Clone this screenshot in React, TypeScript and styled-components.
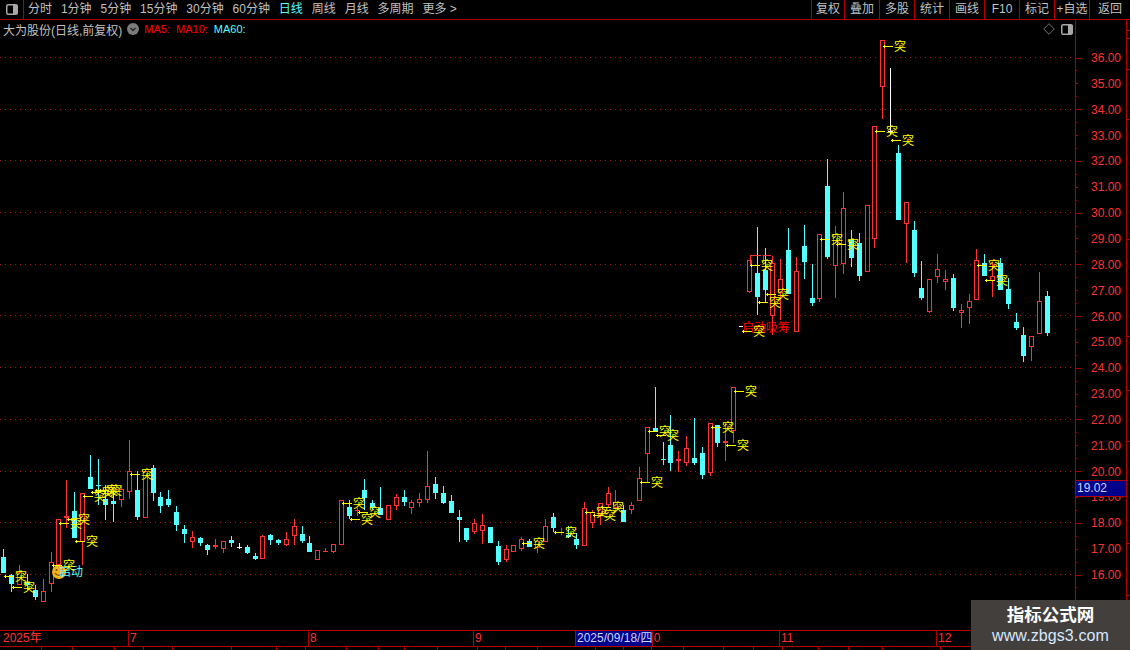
import React from "react";
import styled, { createGlobalStyle } from "styled-components";

const LINE = "#b00000";
const RED = "#ff3232";
const CYAN = "#54ffff";
const FONT = `"Liberation Sans", "Noto Sans CJK SC", sans-serif`;

const Global = createGlobalStyle`
  html, body { margin: 0; padding: 0; background: #000; overflow: hidden; }
  body { font-family: ${FONT}; font-size: 12px; }
`;

const Page = styled.div`
  position: relative;
  width: 1130px;
  height: 650px;
  background: #000;
  overflow: hidden;
  display: flex;
  flex-direction: column;
`;

const Toolbar = styled.div`
  display: flex;
  align-items: stretch;
  height: 19px;
  border-bottom: 1px solid ${LINE};
  color: #c0c0c0;
`;
const IconCell = styled.div`
  width: 23px;
  display: flex;
  align-items: center;
  justify-content: center;
  border-right: 1px solid ${LINE};
`;
const PeriodNav = styled.nav`
  display: flex;
  align-items: center;
  gap: 8.9px;
  padding-left: 4px;
`;
const PeriodItem = styled.span<{ $active?: boolean }>`
  color: ${(p) => (p.$active ? CYAN : "#c0c0c0")};
  white-space: nowrap;
  line-height: 19px;
`;
const ToolGroup = styled.div`
  display: flex;
  margin-left: auto;
`;
const ToolButton = styled.div<{ $w: number }>`
  width: ${(p) => p.$w}px;
  box-sizing: border-box;
  border-left: 1px solid ${LINE};
  text-align: center;
  line-height: 19px;
  white-space: nowrap;
`;

const Body = styled.div`
  display: flex;
  height: 610px;
`;
const ChartArea = styled.div`
  position: relative;
  width: 1075px;
  height: 610px;
`;
const ChartSvg = styled.svg`
  display: block;
  font-family: ${FONT};
`;
const InfoRow = styled.div`
  position: absolute;
  left: 3px;
  top: 0;
  right: 0;
  height: 18px;
  display: flex;
  align-items: center;
  color: #c0c0c0;
  white-space: nowrap;
`;
const MaLabel = styled.span<{ $color: string; $gap: number }>`
  color: ${(p) => p.$color};
  margin-left: ${(p) => p.$gap}px;
  font-size: 11px;
`;
const InfoIcons = styled.div`
  margin-left: auto;
  margin-right: 2px;
  display: flex;
  align-items: center;
  gap: 6px;
`;
const PriceAxis = styled.div`
  position: relative;
  width: 50px;
  height: 610px;
  border-left: 1px solid ${LINE};
  border-right: 1px solid ${LINE};
`;
const PriceTag = styled.div`
  position: absolute;
  left: 0;
  right: 0;
  top: 460px;
  height: 15px;
  background: #00008b;
  border-top: 1px solid ${LINE};
  border-bottom: 1px solid ${LINE};
  color: #cdd6ff;
  line-height: 15px;
  padding-left: 1px;
`;
const SideStrip = styled.div`
  flex: 1;
`;

const TimeAxis = styled.div`
  position: relative;
  display: flex;
  height: 15px;
  border-top: 1px solid ${LINE};
  border-bottom: 1px solid ${LINE};
  color: ${RED};
  line-height: 15px;
`;
const TimeCell = styled.div<{ $w: number; $first?: boolean }>`
  flex: 0 0 ${(p) => p.$w}px;
  box-sizing: border-box;
  padding-left: ${(p) => (p.$first ? 3 : 1)}px;
  border-left: ${(p) => (p.$first ? "none" : `1px solid ${LINE}`)};
`;
const DateTag = styled.div`
  position: absolute;
  left: 575px;
  top: 0;
  width: 78px;
  height: 15px;
  box-sizing: border-box;
  padding-left: 1px;
  background: #00008b;
  border-left: 1px solid ${LINE};
  border-right: 1px solid ${LINE};
  color: #cdd6ff;
  white-space: nowrap;
`;
const BottomStrip = styled.div`
  height: 3px;
  display: flex;
`;
const StripTick = styled.i<{ $w: number }>`
  flex: 0 0 ${(p) => p.$w}px;
  box-sizing: border-box;
  border-right: 1px solid ${LINE};
`;

const Watermark = styled.div`
  position: absolute;
  right: 0;
  bottom: 0;
  width: 159px;
  height: 50px;
  background: #433f3d;
  display: flex;
  flex-direction: column;
  align-items: center;
  padding-top: 4px;
  box-sizing: border-box;
`;
const WatermarkTitle = styled.div`
  color: #fff;
  font-weight: 700;
  font-size: 17.5px;
  line-height: 22px;
`;
const WatermarkUrl = styled.div`
  color: #d6e8ff;
  font-size: 16px;
  line-height: 19px;
  letter-spacing: 0.1px;
`;

type Candle = [number, number, number, number, number, "r" | "c" | "w"];
const candles: Candle[] = [
  [3, 549, 557, 573, 573, "c"], [11, 574, 575, 584, 592, "c"], [19, 565, 572, 585, 585, "r"], [27, 574, 582, 585, 590, "c"],
  [35, 585, 590, 597, 600, "c"], [43, 579, 591, 602, 602, "r"], [51, 552, 562, 584, 592, "r"], [58, 519, 519, 565, 565, "r"],
  [66, 480, 516, 518, 528, "r"], [74, 492, 511, 538, 538, "c"], [82, 493, 493, 542, 565, "r"], [90, 455, 477, 489, 489, "c"],
  [98, 459, 485, 486, 505, "c"], [105, 485, 499, 505, 520, "c"], [113, 490, 501, 504, 522, "c"], [121, 485, 489, 500, 507, "r"],
  [129, 440, 471, 492, 499, "r"], [137, 471, 490, 517, 520, "c"], [145, 470, 471, 518, 518, "r"], [153, 465, 468, 493, 501, "c"],
  [160, 492, 497, 506, 513, "c"], [168, 490, 499, 505, 507, "c"], [176, 506, 512, 525, 531, "c"], [184, 525, 529, 534, 543, "c"],
  [192, 531, 537, 542, 548, "r"], [200, 537, 538, 543, 546, "c"], [207, 544, 545, 550, 555, "c"], [215, 539, 545, 547, 549, "r"],
  [223, 541, 541, 549, 553, "r"], [231, 536, 540, 543, 547, "c"], [239, 543, 547, 548, 549, "w"], [247, 545, 547, 553, 554, "c"],
  [255, 553, 556, 559, 560, "c"], [262, 535, 536, 559, 559, "r"], [270, 534, 535, 540, 545, "c"], [278, 539, 540, 543, 545, "c"],
  [286, 532, 539, 545, 546, "r"], [294, 519, 526, 536, 545, "r"], [302, 526, 534, 541, 543, "c"], [309, 536, 543, 552, 552, "c"],
  [317, 550, 550, 560, 560, "r"], [325, 548, 551, 552, 552, "r"], [333, 544, 544, 552, 553, "r"], [341, 500, 500, 545, 545, "r"],
  [349, 500, 507, 516, 519, "c"], [357, 508, 510, 511, 516, "r"], [364, 479, 490, 498, 510, "c"], [372, 500, 503, 508, 510, "c"],
  [380, 487, 508, 515, 515, "c"], [388, 505, 505, 520, 520, "r"], [396, 494, 497, 506, 510, "r"], [404, 490, 497, 502, 506, "c"],
  [411, 500, 502, 508, 514, "r"], [419, 493, 499, 503, 507, "r"], [427, 451, 486, 500, 503, "r"], [435, 477, 484, 493, 499, "c"],
  [443, 486, 493, 503, 504, "c"], [451, 495, 501, 513, 513, "c"], [459, 510, 517, 520, 542, "c"], [466, 528, 528, 540, 542, "c"],
  [474, 519, 523, 532, 534, "r"], [482, 514, 525, 531, 544, "r"], [490, 527, 527, 543, 543, "c"], [498, 541, 546, 562, 565, "c"],
  [506, 545, 549, 560, 562, "r"], [513, 545, 545, 552, 552, "r"], [521, 537, 539, 549, 551, "r"], [529, 539, 541, 547, 547, "c"],
  [537, 540, 541, 548, 553, "r"], [545, 519, 526, 542, 542, "r"], [553, 513, 517, 528, 532, "c"], [561, 528, 532, 533, 535, "r"],
  [568, 526, 535, 537, 538, "c"], [576, 533, 539, 545, 549, "c"], [584, 502, 508, 546, 546, "r"], [592, 510, 512, 523, 528, "r"],
  [600, 503, 503, 515, 525, "r"], [608, 487, 493, 505, 507, "r"], [615, 490, 502, 508, 512, "r"], [623, 505, 510, 522, 522, "c"],
  [631, 502, 505, 510, 514, "r"], [639, 467, 478, 501, 501, "r"], [647, 427, 427, 454, 482, "r"], [655, 387, 428, 432, 432, "c"],
  [663, 442, 459, 460, 465, "c"], [670, 415, 445, 463, 471, "c"], [678, 451, 459, 461, 472, "r"], [686, 436, 448, 463, 466, "r"],
  [694, 418, 458, 463, 465, "c"], [702, 447, 453, 475, 479, "c"], [710, 423, 423, 473, 476, "r"], [717, 425, 425, 443, 447, "c"],
  [725, 423, 441, 443, 461, "r"], [733, 387, 387, 431, 443, "r"],
  [749, 260, 260, 292, 293, "r"], [757, 227, 273, 297, 315, "c"], [765, 248, 270, 290, 302, "c"], [772, 256, 263, 316, 335, "r"],
  [780, 259, 279, 293, 320, "r"], [788, 228, 250, 294, 294, "c"], [796, 257, 271, 332, 332, "r"], [804, 225, 246, 262, 279, "c"],
  [812, 264, 298, 303, 306, "c"], [819, 234, 234, 299, 302, "r"], [827, 159, 186, 257, 259, "c"], [835, 226, 234, 266, 298, "r"],
  [843, 192, 208, 264, 274, "r"], [851, 230, 240, 258, 267, "c"], [859, 233, 243, 276, 281, "c"], [867, 205, 205, 272, 272, "r"],
  [874, 126, 126, 239, 248, "r"], [882, 40, 40, 87, 119, "r"], [890, 68, 131, 132, 135, "w"], [898, 145, 153, 220, 220, "c"],
  [906, 202, 202, 224, 263, "r"], [914, 221, 230, 273, 277, "c"], [921, 261, 288, 298, 300, "c"], [929, 279, 279, 312, 313, "r"],
  [937, 254, 269, 277, 283, "r"], [945, 270, 279, 282, 290, "r"], [953, 274, 278, 308, 311, "c"], [961, 304, 310, 313, 328, "r"],
  [969, 294, 301, 308, 324, "r"], [976, 249, 260, 300, 300, "r"], [984, 254, 263, 276, 276, "c"], [992, 263, 276, 281, 297, "r"],
  [1000, 258, 263, 290, 290, "c"], [1008, 278, 289, 304, 309, "c"], [1016, 313, 322, 328, 330, "c"], [1023, 327, 335, 356, 362, "c"],
  [1031, 336, 336, 347, 361, "r"], [1039, 272, 301, 334, 334, "r"], [1047, 291, 296, 333, 336, "c"],
];

const signals: [number, number][] = [
  [4, 576], [12, 587], [52, 565], [59, 523], [67, 519], [75, 541], [83, 496], [91, 492], [95, 490], [99, 490], [130, 474],
  [342, 503], [350, 519], [358, 512], [522, 543], [554, 532], [585, 512], [593, 515], [601, 507],
  [640, 482], [648, 431], [656, 435], [711, 427], [726, 445], [734, 391],
  [742, 331], [750, 265], [758, 302], [766, 294], [820, 239], [836, 244], [875, 131], [883, 46], [891, 140], [977, 265], [985, 280],
];

const gridYs = [57, 109, 160, 212, 264, 315, 367, 419, 471, 522, 574];
const prices = Array.from({ length: 21 }, (_, i) => 36 - i);
const priceY = (p: number) => 57.5 + (36 - p) * 25.85;

const CandleMark: React.FC<{ c: Candle }> = ({ c }) => {
  const [x, wt, bt, bb, wb, t] = c;
  const col = t === "r" ? RED : t === "c" ? CYAN : "#ffffff";
  const thin = bb - bt <= 2;
  const wick = (
    <>
      {wt < bt && <rect x={x} y={wt} width={1} height={bt - wt} fill={col} />}
      {wb > bb && <rect x={x} y={bb} width={1} height={wb - bb} fill={col} />}
    </>
  );
  if (t === "c" || thin) {
    return (
      <>
        {wick}
        <rect x={x - 2} y={bt} width={5} height={Math.max(bb - bt, 1)} fill={col} />
      </>
    );
  }
  return (
    <>
      {wick}
      <rect x={x - 1.5} y={bt + 0.5} width={4} height={bb - bt - 1} fill="#000" stroke={col} strokeWidth={1} />
    </>
  );
};

const SignalMark: React.FC<{ x: number; y: number }> = ({ x, y }) => (
  <g fill="#ffff00">
    <rect x={x} y={y} width={10} height={1} />
    <rect x={x + 1} y={y - 1} width={1} height={3} />
    <text x={x + 11} y={y + 5} fontSize={12}>突</text>
  </g>
);

const SplitIcon: React.FC = () => (
  <svg width="12" height="11" viewBox="0 0 12 11">
    <rect x="0.75" y="0.75" width="10.5" height="9.5" rx="1.5" fill="none" stroke="#a8a8a8" strokeWidth="1.5" />
    <rect x="7" y="1" width="4.5" height="9" fill="#a8a8a8" />
  </svg>
);

const periods = ["分时", "1分钟", "5分钟", "15分钟", "30分钟", "60分钟", "日线", "周线", "月线", "多周期", "更多 >"];
const tools: [string, number][] = [
  ["复权", 33], ["叠加", 35], ["多股", 35], ["统计", 35], ["画线", 35], ["F10", 35], ["标记", 35], ["+自选", 35], ["返回", 41],
];
const timeCells: [string, number][] = [
  ["2025年", 128], ["7", 180], ["8", 165], ["9", 172], ["10", 134], ["11", 157], ["12", 194],
];
const stripTicks = [42, 31, 42, 29, 29, 59, 45, 29, 41, 32, 26, 33, 40, 28, 32, 58, 28, 28, 32, 40, 30, 29, 36, 30, 34, 58, 36, 30];

export default function App() {
  return (
    <Page>
      <Global />
      <Toolbar>
        <IconCell><SplitIcon /></IconCell>
        <PeriodNav>
          {periods.map((p) => (
            <PeriodItem key={p} $active={p === "日线"}>{p}</PeriodItem>
          ))}
        </PeriodNav>
        <ToolGroup>
          {tools.map(([t, w]) => (
            <ToolButton key={t} $w={w}>{t}</ToolButton>
          ))}
        </ToolGroup>
      </Toolbar>
      <Body>
        <ChartArea>
          <ChartSvg width={1075} height={610} viewBox="0 20 1075 610">
            <g shapeRendering="crispEdges">
              {gridYs.map((y) => (
                <line key={y} x1={0} x2={1075} y1={y + 0.5} y2={y + 0.5} stroke="#a81414" strokeDasharray="1 4" />
              ))}
              {candles.map((c) => (
                <CandleMark key={c[0]} c={c} />
              ))}
              <path d="M750.5 265V255.5H760.5M763.5 262V255.5H770.5" fill="none" stroke={RED} />
              <rect x={739} y={326} width={4} height={1} fill="#fff" />
            </g>
            <circle cx={59} cy={572} r={7} fill="#f0b41c" />
            <path d="M55 573a4.5 4.5 0 0 0 8 0" fill="none" stroke="#7a4a00" strokeWidth={1.2} />
            <circle cx={56.5} cy={570} r={1} fill="#7a4a00" />
            <circle cx={61.5} cy={570} r={1} fill="#7a4a00" />
            <text x={59} y={576} fontSize={12} fill={CYAN}>启动</text>
            <text x={742} y={332} fontSize={12} fill="#ff0000">启动吸筹</text>
            {signals.map(([x, y]) => (
              <SignalMark key={`${x}-${y}`} x={x} y={y} />
            ))}
          </ChartSvg>
          <InfoRow>
            大为股份(日线,前复权)
            <svg width="12" height="12" viewBox="0 0 12 12" style={{ marginLeft: 5 }}>
              <circle cx="6" cy="6" r="6" fill="#7b7b7b" />
              <path d="M3.5 5l2.5 2.5L8.5 5" fill="none" stroke="#222" strokeWidth="1.3" />
            </svg>
            <MaLabel $color="#ff0000" $gap={5}>MA5:</MaLabel>
            <MaLabel $color="#ff0000" $gap={6}>MA10:</MaLabel>
            <MaLabel $color={CYAN} $gap={6}>MA60:</MaLabel>
            <InfoIcons>
              <svg width="12" height="12" viewBox="0 0 12 12">
                <path d="M6 .7L11.3 6 6 11.3.7 6z" fill="none" stroke="#777" />
              </svg>
              <SplitIcon />
            </InfoIcons>
          </InfoRow>
        </ChartArea>
        <PriceAxis>
          <ChartSvg width={50} height={610} viewBox="1076 20 50 610">
            <g shapeRendering="crispEdges" fill={LINE}>
              {prices.map((p) => (
                <React.Fragment key={p}>
                  <rect x={1076} y={Math.round(priceY(p))} width={p % 2 === 0 ? 5 : 2} height={1} />
                  <rect x={1076} y={Math.round(priceY(p) + 12.9)} width={1} height={1} />
                </React.Fragment>
              ))}
            </g>
            {prices.map((p) => (
              <text key={p} x={1091} y={priceY(p) + 4.5} fontSize={12} fill={RED}>{p.toFixed(2)}</text>
            ))}
          </ChartSvg>
          <PriceTag>19.02</PriceTag>
        </PriceAxis>
        <SideStrip>
          <ChartSvg width={3} height={610} viewBox="1127 20 3 610">
            <g shapeRendering="crispEdges" fill={LINE}>
              {[30, 38, 69, 119, 239, 336, 390, 441, 543, 595].map((y) => (
                <rect key={y} x={1127} y={y} width={3} height={1} />
              ))}
            </g>
          </ChartSvg>
        </SideStrip>
      </Body>
      <TimeAxis>
        {timeCells.map(([t, w], i) => (
          <TimeCell key={t} $w={w} $first={i === 0}>{t}</TimeCell>
        ))}
        <DateTag>2025/09/18/四</DateTag>
      </TimeAxis>
      <BottomStrip>
        {stripTicks.map((w, i) => (
          <StripTick key={i} $w={w} />
        ))}
      </BottomStrip>
      <Watermark>
        <WatermarkTitle>指标公式网</WatermarkTitle>
        <WatermarkUrl>www.zbgs3.com</WatermarkUrl>
      </Watermark>
    </Page>
  );
}
